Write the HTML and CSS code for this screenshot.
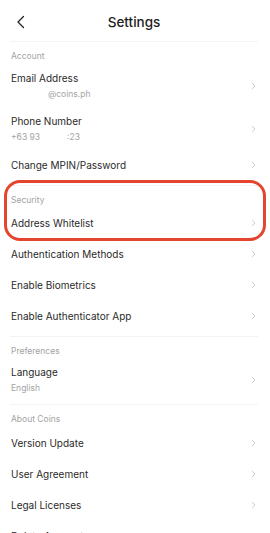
FILE: index.html
```html
<!DOCTYPE html>
<html>
<head>
<meta charset="utf-8">
<link rel="stylesheet" href="styles.css">
</head>
<body>
<div class="page">
  <header class="header">
    <svg class="back" width="10" height="14" viewBox="0 0 10 14"><path d="M7.5 1.5 L2 7 L7.5 12.5" fill="none" stroke="#222" stroke-width="1.3" stroke-linecap="round" stroke-linejoin="round"/></svg>
    <div class="title">Settings</div>
  </header>

  <section class="section">
    <div class="label">Account</div>
    <div class="item two">
      <div class="texts">
        <div class="name">Email Address</div>
        <div class="sub"><span class="email">@coins.ph</span></div>
      </div>
      <svg class="chev" width="5" height="8" viewBox="0 0 5 8"><path d="M1 1 L4 4 L1 7" fill="none" stroke="#c8c8c8" stroke-width="0.9"/></svg>
    </div>
    <div class="item two">
      <div class="texts">
        <div class="name">Phone Number</div>
        <div class="sub">+63 93<span class="gap"></span>:23</div>
      </div>
      <svg class="chev" width="5" height="8" viewBox="0 0 5 8"><path d="M1 1 L4 4 L1 7" fill="none" stroke="#c8c8c8" stroke-width="0.9"/></svg>
    </div>
    <div class="item">
      <div class="name">Change MPIN/Password</div>
      <svg class="chev" width="5" height="8" viewBox="0 0 5 8"><path d="M1 1 L4 4 L1 7" fill="none" stroke="#c8c8c8" stroke-width="0.9"/></svg>
    </div>
  </section>

  <section class="section">
    <div class="highlight-wrap">
      <div class="label">Security</div>
      <div class="item">
        <div class="name">Address Whitelist</div>
        <svg class="chev" width="5" height="8" viewBox="0 0 5 8"><path d="M1 1 L4 4 L1 7" fill="none" stroke="#c8c8c8" stroke-width="0.9"/></svg>
      </div>
      <div class="highlight"></div>
    </div>
    <div class="item">
      <div class="name">Authentication Methods</div>
      <svg class="chev" width="5" height="8" viewBox="0 0 5 8"><path d="M1 1 L4 4 L1 7" fill="none" stroke="#c8c8c8" stroke-width="0.9"/></svg>
    </div>
    <div class="item">
      <div class="name">Enable Biometrics</div>
      <svg class="chev" width="5" height="8" viewBox="0 0 5 8"><path d="M1 1 L4 4 L1 7" fill="none" stroke="#c8c8c8" stroke-width="0.9"/></svg>
    </div>
    <div class="item">
      <div class="name">Enable Authenticator App</div>
      <svg class="chev" width="5" height="8" viewBox="0 0 5 8"><path d="M1 1 L4 4 L1 7" fill="none" stroke="#c8c8c8" stroke-width="0.9"/></svg>
    </div>
  </section>

  <section class="section">
    <div class="label">Preferences</div>
    <div class="item two short">
      <div class="texts">
        <div class="name">Language</div>
        <div class="sub">English</div>
      </div>
      <svg class="chev" width="5" height="8" viewBox="0 0 5 8"><path d="M1 1 L4 4 L1 7" fill="none" stroke="#c8c8c8" stroke-width="0.9"/></svg>
    </div>
  </section>

  <section class="section">
    <div class="label about">About Coins</div>
    <div class="item">
      <div class="name">Version Update</div>
      <svg class="chev" width="5" height="8" viewBox="0 0 5 8"><path d="M1 1 L4 4 L1 7" fill="none" stroke="#c8c8c8" stroke-width="0.9"/></svg>
    </div>
    <div class="item">
      <div class="name">User Agreement</div>
      <svg class="chev" width="5" height="8" viewBox="0 0 5 8"><path d="M1 1 L4 4 L1 7" fill="none" stroke="#c8c8c8" stroke-width="0.9"/></svg>
    </div>
    <div class="item">
      <div class="name">Legal Licenses</div>
      <svg class="chev" width="5" height="8" viewBox="0 0 5 8"><path d="M1 1 L4 4 L1 7" fill="none" stroke="#c8c8c8" stroke-width="0.9"/></svg>
    </div>
    <div class="item">
      <div class="name">Delete Account</div>
      <svg class="chev" width="5" height="8" viewBox="0 0 5 8"><path d="M1 1 L4 4 L1 7" fill="none" stroke="#c8c8c8" stroke-width="0.9"/></svg>
    </div>
  </section>
</div>
</body>
</html>
```

FILE: styles.css
```css
html, body {
  margin: 0;
  padding: 0;
  background: #fff;
}
body {
  font-family: Inter, "Noto Sans", sans-serif;
  color: #2a2a2a;
  overflow: hidden;
  height: 533px;
}
.page {
  width: 270px;
  padding: 0 12px 0 10px;
  box-sizing: border-box;
}
.header {
  height: 41px;
  display: flex;
  align-items: center;
  justify-content: center;
  position: relative;
}
.back {
  position: absolute;
  left: 6px;
  top: 15px;
}
.title {
  font-size: 13.5px;
  font-weight: 500;
  color: #222;
  margin-top: 2px;
}
.section {
  border-top: 1px solid #f3f3f3;
  padding-bottom: 5px;
}
.label {
  font-size: 8.5px;
  line-height: 12px;
  padding: 8px 0 1px 1px;
  color: #a3a3a3;
}
.label.about {
  padding-bottom: 2px;
}
.item {
  display: flex;
  align-items: center;
  justify-content: space-between;
  height: 31px;
  padding-left: 1px;
}
.item.two {
  height: 43px;
  padding-top: 2px;
  box-sizing: border-box;
}
.item.two.short {
  height: 41px;
  padding-top: 2px;
}
.name {
  font-size: 10px;
  line-height: 16px;
  color: #2a2a2a;
}
.sub {
  font-size: 8.5px;
  line-height: 14px;
  margin-top: 1px;
  color: #a3a3a3;
}
.email {
  margin-left: 37px;
}
.gap {
  display: inline-block;
  width: 27px;
}
.chev {
  margin-right: 2px;
}
.highlight-wrap {
  position: relative;
}
.highlight {
  position: absolute;
  left: -6px;
  right: -8px;
  top: -6px;
  bottom: -3px;
  border: 3px solid #e4452e;
  border-radius: 16px;
  pointer-events: none;
}
```
